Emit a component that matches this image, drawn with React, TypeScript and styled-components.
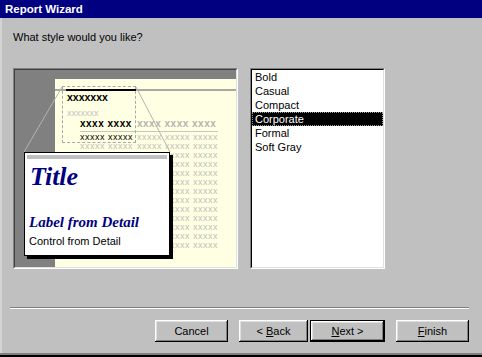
import styled, { createGlobalStyle } from 'styled-components';

// Report Wizard — style picker step

const GlobalStyle = createGlobalStyle`
  body {
    margin: 0;
    font-family: "Liberation Sans", Arial, sans-serif;
  }
`;

const Window = styled.div`
  width: 482px;
  height: 357px;
  box-sizing: border-box;
  background: #c0c0c0;
  display: flex;
  flex-direction: column;
  box-shadow: inset 0 -2px 0 #000, inset 0 -4px 0 #808080, inset 2px 0 0 #d4d4d4;
  overflow: hidden;
`;

const TitleBar = styled.div`
  height: 18px;
  box-sizing: border-box;
  padding: 2px 0 0 5px;
  background: #000080;
  color: #fff;
  font-size: 11.5px;
  font-weight: 700;
  line-height: 15px;
`;

const Prompt = styled.div`
  margin: 13px 0 0 13px;
  font-size: 11px;
  line-height: 13px;
  color: #000;
`;

const Main = styled.div`
  display: flex;
  gap: 12px;
  margin-top: 24px;
  padding-left: 13px;
`;

const Sunken = styled.div`
  box-sizing: border-box;
  height: 201px;
  border-style: solid;
  border-width: 1px;
  border-color: #808080 #fff #fff #808080;
`;

const Preview = styled(Sunken)`
  width: 225px;
  background: #808080;
`;

const PreviewInner = styled.div`
  position: relative;
  height: 100%;
  box-sizing: border-box;
  border-style: solid;
  border-width: 1px;
  border-color: #404040 #dfdfdf #dfdfdf #404040;
  padding: 9px 0 0 40px;
  display: flex;
`;

const Page = styled.div`
  flex: 1;
  background: #ffffe4;
  display: flex;
  flex-direction: column;
  padding-top: 10px;
`;

const TopRule = styled.div`
  height: 2px;
  background: #a8a8a0;
`;

const HeaderRule = styled.div`
  margin-left: 11px;
  width: 70px;
  height: 2px;
  background: #000;
`;

const ReportHead = styled.div`
  margin: 0 0 0 12px;
  font-size: 10.5px;
  font-weight: 700;
  line-height: 12px;
  color: #000;
`;

const FaintHead = styled.div`
  margin: 6px 0 0 12px;
  font-size: 9px;
  line-height: 9px;
  color: #c4c4c0;
`;

const Row = styled.div<{ $rule?: boolean; $top?: number }>`
  display: flex;
  margin: ${({ $top }) => $top ?? 0}px 0 0 25px;
  width: 138px;
  line-height: 9px;
  letter-spacing: 0.5px;
  font-size: 9px;
  white-space: nowrap;
  ${({ $rule }) => ($rule ? 'border-bottom: 1px solid #c8c8c0; padding-bottom: 2px;' : '')}
`;

const Cell = styled.span<{ $w?: number; $dark?: boolean; $bold?: boolean }>`
  width: ${({ $w }) => ($w ? `${$w}px` : 'auto')};
  flex: none;
  color: ${({ $dark, $bold }) => ($dark ? '#000' : $bold ? '#b4b4b0' : '#c0c0b8')};
  font-weight: ${({ $bold }) => ($bold ? 700 : 400)};
  font-size: ${({ $bold }) => ($bold ? '10px' : '9px')};
  line-height: ${({ $bold }) => ($bold ? '11px' : '9px')};
`;

const Lines = styled.svg`
  position: absolute;
  left: 0;
  top: 0;
  pointer-events: none;
`;

const Selection = styled.div`
  position: absolute;
  left: 47px;
  top: 16px;
  width: 74px;
  height: 57px;
  box-sizing: border-box;
  border: 1px dashed #a8a8a8;
`;

const Card = styled.div`
  position: absolute;
  left: 9px;
  top: 82px;
  width: 146px;
  height: 104px;
  box-sizing: border-box;
  background: #fff;
  border: 1px solid #000;
  box-shadow: 3px 3px 0 #000;
  display: flex;
  flex-direction: column;
`;

const CardBar = styled.div`
  margin: 2px 2px 0;
  height: 4px;
  background: #c0c0c0;
`;

const CardTitle = styled.div`
  margin: 3px 0 0 5px;
  font-family: "Liberation Serif", "Times New Roman", serif;
  font-style: italic;
  font-weight: 700;
  font-size: 26px;
  line-height: 30px;
  color: #000080;
`;

const CardLabel = styled.div`
  margin: 21px 0 0 4px;
  font-family: "Liberation Serif", "Times New Roman", serif;
  font-style: italic;
  font-weight: 700;
  font-size: 15px;
  line-height: 18px;
  color: #000080;
`;

const CardControl = styled.div`
  margin: 3px 0 0 4px;
  font-size: 11px;
  line-height: 14px;
  color: #000;
`;

const ListBox = styled(Sunken)`
  width: 135px;
  background: #fff;
`;

const ListInner = styled.div`
  height: 100%;
  box-sizing: border-box;
  border-style: solid;
  border-width: 1px;
  border-color: #000 #dfdfdf #dfdfdf #000;
`;

const Item = styled.div<{ $selected?: boolean }>`
  height: 14px;
  line-height: 14px;
  padding-left: 3px;
  font-size: 11px;
  color: ${({ $selected }) => ($selected ? '#fff' : '#000')};
  background: ${({ $selected }) => ($selected ? '#000' : 'transparent')};
  outline: ${({ $selected }) => ($selected ? '1px dotted #9a9a9a' : 'none')};
  outline-offset: -1px;
`;

const Separator = styled.div`
  margin: 38px 13px 0 10px;
  border-top: 1px solid #808080;
  border-bottom: 1px solid #fff;
`;

const ButtonRow = styled.div`
  display: flex;
  justify-content: flex-end;
  margin-top: 11px;
  padding-right: 13px;
`;

const Button = styled.button<{ $w: number; $gap: number; $default?: boolean }>`
  width: ${({ $w }) => $w}px;
  height: 22px;
  margin-right: ${({ $gap }) => $gap}px;
  padding: 0;
  background: #c0c0c0;
  font-family: "Liberation Sans", Arial, sans-serif;
  font-size: 11px;
  color: #000;
  border: ${({ $default }) => ($default ? '1px solid #000' : 'none')};
  box-shadow: inset -1px -1px 0 #000, inset 1px 1px 0 #fff, inset -2px -2px 0 #808080,
    inset 2px 2px 0 #dfdfdf;
`;

const styles = ['Bold', 'Casual', 'Compact', 'Corporate', 'Formal', 'Soft Gray'];

export default function App() {
  const rows = Array.from({ length: 12 });
  return (
    <>
      <GlobalStyle />
      <Window>
        <TitleBar>Report Wizard</TitleBar>
        <Prompt>What style would you like?</Prompt>
        <Main>
          <Preview>
            <PreviewInner>
              <Page>
                <TopRule>
                  <HeaderRule />
                </TopRule>
                <ReportHead>xxxxxxx</ReportHead>
                <FaintHead>xxxxxxx</FaintHead>
                <Row $rule>
                  <Cell $w={57} $dark $bold>xxxx xxxx</Cell>
                  <Cell $bold>xxxx xxxx xxxx</Cell>
                </Row>
                <Row $top={1}>
                  <Cell $w={57} $dark>xxxxx xxxxx</Cell>
                  <Cell>xxxxx xxxxx xxxxx</Cell>
                </Row>
                {rows.map((_, i) => (
                  <Row key={i}>
                    <Cell $w={57}>xxxxx xxxxx</Cell>
                    <Cell>xxxxx xxxxx xxxxx</Cell>
                  </Row>
                ))}
              </Page>
              <Lines width="221" height="197">
                <line x1="47" y1="17" x2="9" y2="82" stroke="#b4b4b0" strokeWidth="1" />
                <line x1="121" y1="17" x2="155" y2="82" stroke="#b4b4b0" strokeWidth="1" />
              </Lines>
              <Selection />
              <Card>
                <CardBar />
                <CardTitle>Title</CardTitle>
                <CardLabel>Label from Detail</CardLabel>
                <CardControl>Control from Detail</CardControl>
              </Card>
            </PreviewInner>
          </Preview>
          <ListBox>
            <ListInner>
              {styles.map((s) => (
                <Item key={s} $selected={s === 'Corporate'}>{s}</Item>
              ))}
            </ListInner>
          </ListBox>
        </Main>
        <Separator />
        <ButtonRow>
          <Button $w={73} $gap={11}>Cancel</Button>
          <Button $w={69} $gap={2}>&lt; <u>B</u>ack</Button>
          <Button $w={75} $gap={11} $default><u>N</u>ext &gt;</Button>
          <Button $w={73} $gap={0}><u>F</u>inish</Button>
        </ButtonRow>
      </Window>
    </>
  );
}
